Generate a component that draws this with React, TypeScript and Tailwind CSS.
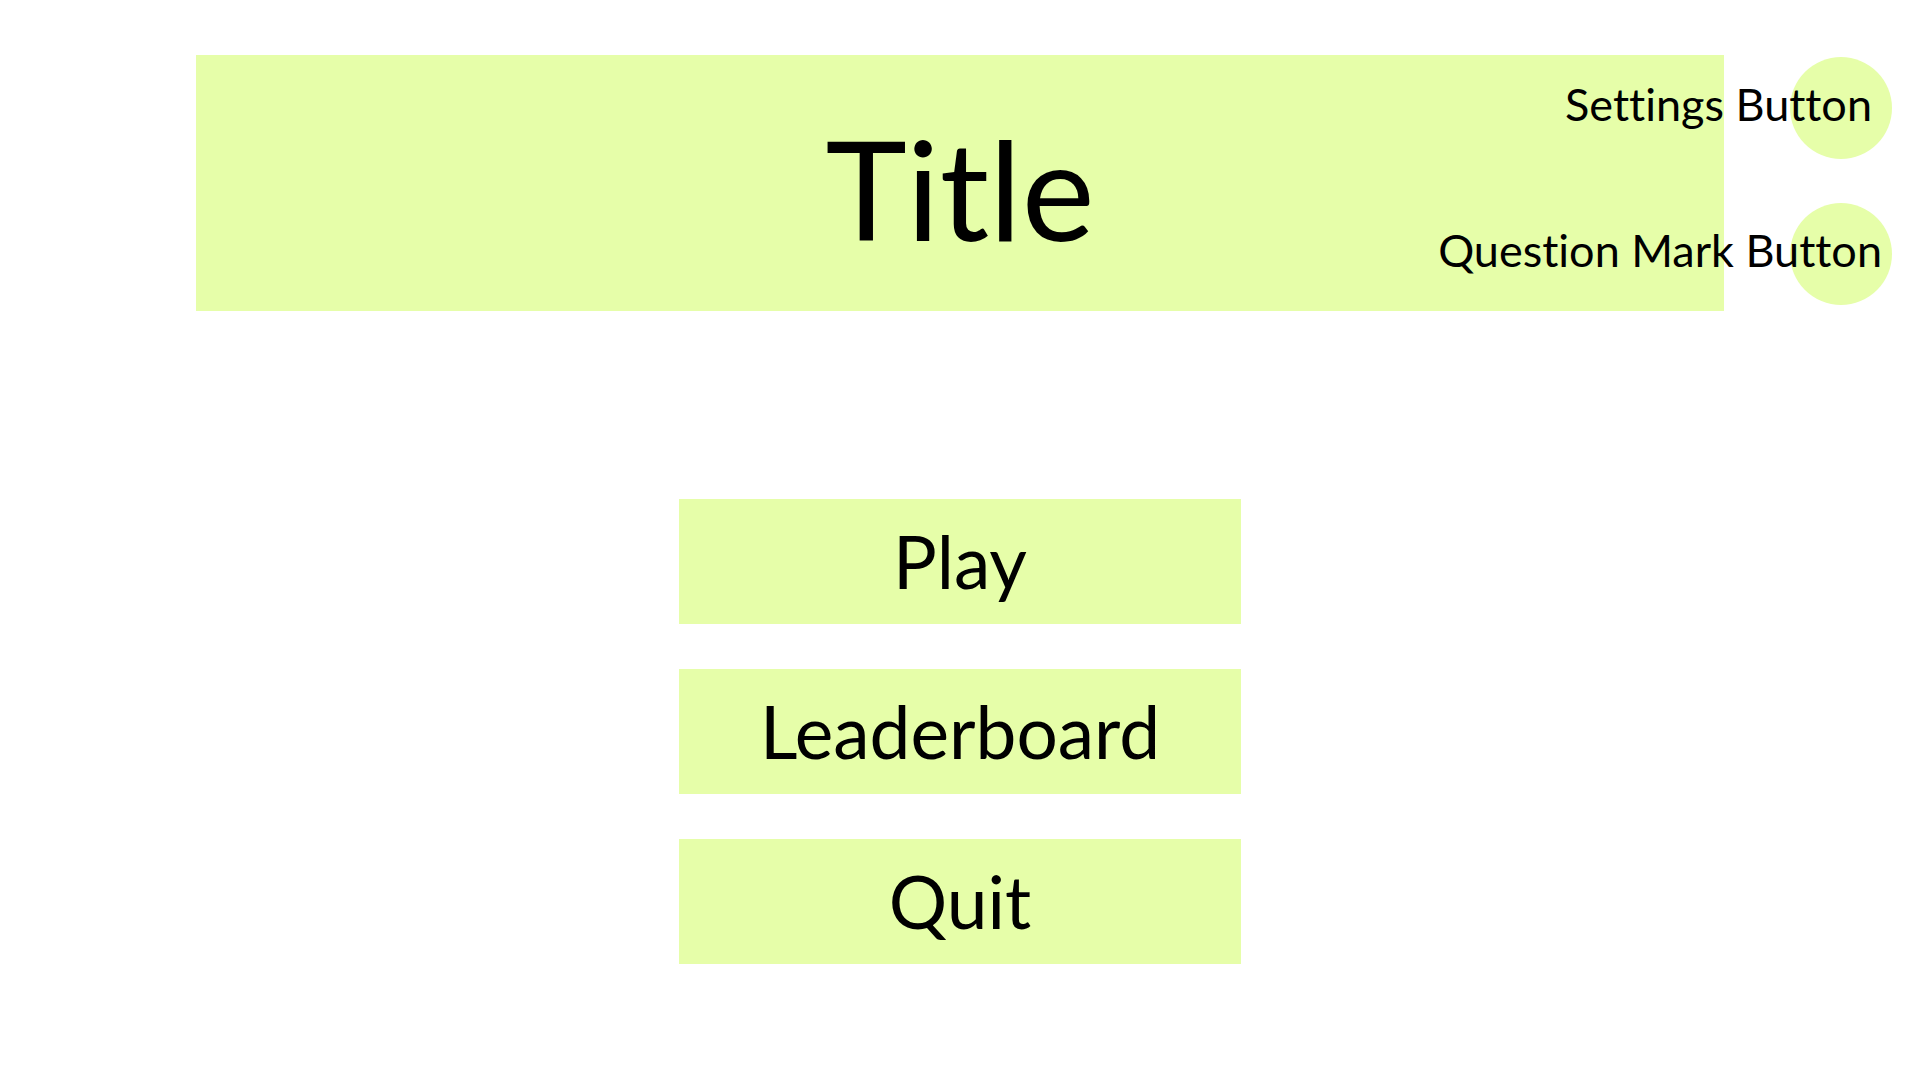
import React from "react";

const menuItems = ["Play", "Leaderboard", "Quit"];

const CircleButton: React.FC<{ label: string; offset: string }> = ({
  label,
  offset,
}) => {
  return (
    <div className="relative w-[102px] h-[102px]">
      <div className="w-full h-full rounded-full bg-[#e6fea9]" />
      <span
        className={`absolute top-[25px] ${offset} whitespace-nowrap text-[45px] leading-none text-black`}
      >
        {label}
      </span>
    </div>
  );
};

export default function App() {
  return (
    <div
      className="w-[1920px] h-[1080px] bg-white overflow-hidden [font-variant-ligatures:none]"
      style={{ fontFamily: "Lato, 'Open Sans', sans-serif" }}
    >
      <header className="flex pt-[55px]">
        <div className="ml-[196px] w-[1528px] h-[256px] bg-[#e6fea9] flex items-center justify-center pt-[10px]">
          <h1 className="text-[138px] leading-none text-black">Title</h1>
        </div>
        <div className="ml-[66px] pt-[2px] flex flex-col gap-[44px]">
          <CircleButton label="Settings Button" offset="right-[20px]" />
          <CircleButton label="Question Mark Button" offset="right-[10px]" />
        </div>
      </header>

      <main className="flex flex-col items-center gap-[45px] mt-[188px]">
        {menuItems.map((item) => (
          <button
            key={item}
            className="w-[562px] h-[125px] bg-[#e6fea9] flex items-center justify-center text-[73px] leading-none text-black"
          >
            {item}
          </button>
        ))}
      </main>
    </div>
  );
}
